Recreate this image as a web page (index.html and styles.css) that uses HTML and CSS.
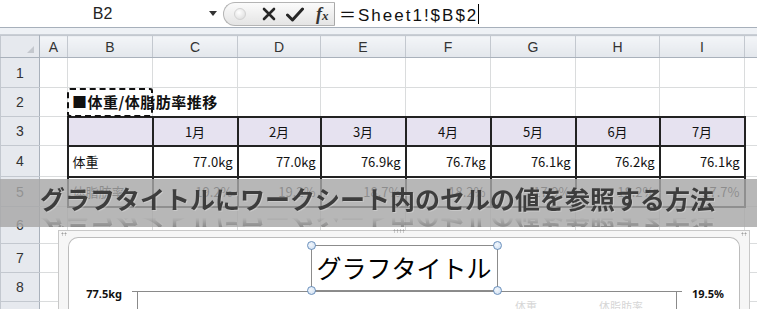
FILE: index.html
```html
<!DOCTYPE html>
<html lang="ja">
<head>
    <meta charset="UTF-8">
    <meta name="viewport" content="width=device-width, initial-scale=1.0">
    <title>グラフタイトルにワークシート内のセルの値を参照する方法</title>
    <link rel="stylesheet" href="styles.css">
</head>
<body>

    <div class="fbar">
        <div class="namebox">
            <span class="name">B2</span>
            <span class="drop"></span>
        </div>
        <div class="btns">
            <span class="dot"></span>
            <svg class="ico" width="14" height="14" viewBox="0 0 14 14"><path d="M2 2 L12 12 M12 2 L2 12" stroke="#262626" stroke-width="2.6" stroke-linecap="round"/></svg>
            <svg class="ico" width="18" height="15" viewBox="0 0 18 15"><path d="M1.5 8 L6.5 13 L16.5 2" fill="none" stroke="#262626" stroke-width="3" stroke-linecap="round" stroke-linejoin="round"/></svg>
            <span class="fx"><i>f</i><small>x</small></span>
        </div>
        <div class="formula">＝Sheet1!$B$2<span class="caret"></span></div>
    </div>
    <div class="strip"></div>

    <div class="sheet">
        <table class="grid">
            <colgroup>
                <col class="c-head">
                <col class="c-a">
                <col class="c-w"><col class="c-w"><col class="c-d"><col class="c-w">
                <col class="c-w"><col class="c-w"><col class="c-h"><col class="c-w">
                <col class="c-j">
            </colgroup>
            <tr class="r-head">
                <th class="corner"><span class="tri"></span></th>
                <th>A</th><th>B</th><th>C</th><th>D</th><th>E</th>
                <th>F</th><th>G</th><th>H</th><th>I</th><th></th>
            </tr>
            <tr class="r1">
                <th>1</th><td></td><td></td><td></td><td></td><td></td><td></td><td></td><td></td><td></td><td></td>
            </tr>
            <tr class="r2">
                <th>2</th><td></td>
                <td class="sel"><span class="title">■体重/体脂肪率推移</span></td>
                <td></td><td></td><td></td><td></td><td></td><td></td><td></td><td></td>
            </tr>
            <tr class="r3">
                <th>3</th><td></td>
                <td class="t mh"></td>
                <td class="t mh">1月</td><td class="t mh">2月</td><td class="t mh">3月</td><td class="t mh">4月</td>
                <td class="t mh">5月</td><td class="t mh">6月</td><td class="t mh">7月</td>
                <td></td>
            </tr>
            <tr class="r4">
                <th>4</th><td></td>
                <td class="t">体重</td>
                <td class="t num">77.0kg</td><td class="t num">77.0kg</td><td class="t num">76.9kg</td><td class="t num">76.7kg</td>
                <td class="t num">76.1kg</td><td class="t num">76.2kg</td><td class="t num">76.1kg</td>
                <td></td>
            </tr>
            <tr class="r5">
                <th>5</th><td></td>
                <td class="t">体脂肪率</td>
                <td class="t num">19.2%</td><td class="t num">19.2%</td><td class="t num">18.7%</td><td class="t num">18.2%</td>
                <td class="t num">17.9%</td><td class="t num">18.2%</td><td class="t num">17.7%</td>
                <td></td>
            </tr>
            <tr class="r6">
                <th>6</th><td></td><td></td><td></td><td></td><td></td><td></td><td></td><td></td><td></td><td></td>
            </tr>
            <tr class="r7">
                <th>7</th><td></td><td></td><td></td><td></td><td></td><td></td><td></td><td></td><td></td><td></td>
            </tr>
            <tr class="r8">
                <th>8</th><td></td><td></td><td></td><td></td><td></td><td></td><td></td><td></td><td></td><td></td>
            </tr>
            <tr class="r9">
                <th>9</th><td></td><td></td><td></td><td></td><td></td><td></td><td></td><td></td><td></td><td></td>
            </tr>
        </table>

        <!-- グラフ (シートの上に重なる) -->
        <div class="chart">
            <span class="grip grip-l"></span>
            <span class="grip grip-c"></span>
            <span class="grip grip-r"></span>
            <div class="chart-area">
                <div class="ctitle">
                    グラフタイトル
                    <span class="hd hd-tl"></span><span class="hd hd-tr"></span>
                    <span class="hd hd-bl"></span><span class="hd hd-br"></span>
                </div>
                <div class="plotrow">
                    <div class="axis-l">77.5kg</div>
                    <div class="plot">
                        <div class="plot-in">
                            <span class="legend">体重</span>
                            <span class="legend">体脂肪率</span>
                        </div>
                    </div>
                    <div class="axis-r">19.5%</div>
                </div>
            </div>
        </div>

        <!-- 見出し帯 -->
        <div class="banner">
            <span class="banner-text">グラフタイトルにワークシート内のセルの値を参照する方法</span>
        </div>
    </div>

</body>
</html>
```

FILE: styles.css
```css
* {
    margin: 0;
    padding: 0;
    box-sizing: border-box;
}
body {
    width: 757px;
    height: 309px;
    overflow: hidden;
    background-color: #fff;
    color: #111;
    font-family: "Noto Sans CJK JP", "Noto Sans", sans-serif;
}

/* 数式バー */
.fbar {
    display: flex;
    height: 28px;
    border-bottom: 1px solid #a7b0bb;
    background-color: #fff;
}
.namebox {
    width: 223px;
    display: flex;
    align-items: center;
}
.name {
    width: 205px;
    text-align: center;
    font-family: "Liberation Sans", sans-serif;
    font-size: 16px;
    color: #222;
}
.drop {
    width: 0;
    height: 0;
    border-left: 4px solid transparent;
    border-right: 4px solid transparent;
    border-top: 5px solid #333;
    margin-left: 4px;
}
.btns {
    width: 112px;
    margin: 2px 0 1px;
    display: flex;
    align-items: center;
    gap: 10px;
    padding-left: 10px;
    border: 1px solid #b4b4b4;
    border-right: 1px solid #a8a8a8;
    border-radius: 13px 0 0 13px;
    background: linear-gradient(#fbfbfb, #e4e4e4);
}
.dot {
    width: 12px;
    height: 12px;
    border-radius: 50%;
    border: 1px solid #d2d2d2;
    background: radial-gradient(circle at 40% 35%, #fff, #d8d8d8);
    margin-right: 6px;
}
.fx {
    font-family: "Liberation Serif", serif;
    font-weight: bold;
    font-size: 18px;
    color: #333;
    margin-left: 2px;
}
.fx small {
    font-size: 13px;
    font-style: italic;
}
.formula {
    flex: 1;
    display: flex;
    align-items: center;
    padding-left: 4px;
    font-family: "Liberation Sans", "Noto Sans CJK JP", sans-serif;
    font-size: 17px;
    letter-spacing: 2px;
    color: #111;
}
.caret {
    width: 1px;
    height: 20px;
    background-color: #000;
}
.strip {
    height: 7px;
    border-bottom: 1px solid #c9ced5;
    background-color: #eef1f5;
}

/* シート */
.sheet {
    position: relative;
}
.grid {
    width: 757px;
    table-layout: fixed;
    border-collapse: collapse;
    font-size: 13px;
}
.c-head { width: 39px; }
.c-a { width: 28px; }
.c-w { width: 85px; }
.c-d { width: 83px; }
.c-h { width: 84px; }
.c-j { width: 13px; }

.grid th {
    font-family: "Liberation Sans", sans-serif;
    font-weight: normal;
    font-size: 14px;
    color: #333;
    background: linear-gradient(#f3f5f8, #e3e7ec);
    border: 1px solid #c3c8cf;
}
.r-head th {
    height: 22px;
    border-bottom: 1px solid #a9b1bb;
}
.grid tr th:first-child {
    background: #e6e9ee;
    border-right: 1px solid #a9b1bb;
}
.corner {
    position: relative;
}
.tri {
    position: absolute;
    right: 5px;
    bottom: 4px;
    width: 0;
    height: 0;
    border-left: 7px solid transparent;
    border-bottom: 7px solid #c4c8ce;
}
.grid td {
    border: 1px solid #dadcdd;
    padding: 0 4px;
    white-space: nowrap;
    vertical-align: middle;
}
.r1 { height: 30px; }
.r2 { height: 29px; }
.r3 { height: 29px; }
.r4 { height: 31px; }
.r5 { height: 30px; }
.r6 { height: 37px; }
.r7 { height: 29px; }
.r8 { height: 29px; }
.r9 { height: 29px; }

.grid td.t {
    border: 2px solid #222;
}
.grid td.mh {
    background-color: #e6e2f0;
    text-align: center;
}
.grid td.num {
    text-align: right;
}
.sel {
    position: relative;
    overflow: visible;
}
.sel::after {
    content: "";
    position: absolute;
    left: -1px;
    top: 0;
    right: -1px;
    bottom: -1px;
    border: 2px dashed #111;
    border-radius: 3px;
}
.title {
    font-weight: bold;
    font-size: 15px;
    letter-spacing: 0.5px;
}

/* グラフ */
.chart {
    position: absolute;
    left: 58px;
    top: 195px;
    width: 692px;
    height: 90px;
    padding: 6px 9px 0 9px;
    border: 1px solid #c8c8c8;
    background-color: #f6f6f6;
}
.grip {
    position: absolute;
    height: 4px;
    background-image: radial-gradient(circle, #a0a0a0 0.8px, transparent 1.2px);
    background-size: 3px 3px;
}
.grip-l { left: 2px; top: 1px; width: 6px; }
.grip-c { left: 334px; top: -2px; width: 12px; }
.grip-r { right: 2px; top: 1px; width: 6px; }
.chart-area {
    height: 100%;
    background-color: #fff;
    border: 1px solid #bcbcbc;
    border-bottom: none;
    border-radius: 10px 10px 0 0;
}
.ctitle {
    position: relative;
    width: 187px;
    height: 46px;
    margin: 7px auto 0;
    border: 1px solid #8c8c8c;
    text-align: center;
    font-size: 25px;
    line-height: 43px;
    color: #000;
}
.hd {
    position: absolute;
    width: 9px;
    height: 9px;
    border-radius: 50%;
    border: 1px solid #6b91bd;
    background: radial-gradient(circle at 40% 40%, #f4f8fd, #c9dbef);
}
.hd-tl { left: -5px; top: -5px; }
.hd-tr { right: -5px; top: -5px; }
.hd-bl { left: -5px; bottom: -5px; }
.hd-br { right: -5px; bottom: -5px; }
.plotrow {
    display: flex;
}
.axis-l,
.axis-r {
    font-family: "Noto Sans", sans-serif;
    font-size: 11px;
    font-weight: bold;
    line-height: 14px;
    margin-top: -4px;
    color: #111;
}
.axis-l {
    width: 63px;
    text-align: right;
    padding-right: 10px;
}
.axis-r {
    padding-left: 10px;
}
.plot {
    width: 550px;
    padding: 0 5px;
    border-top: 1px solid #8a8a8a;
}
.plot-in {
    height: 30px;
    border-left: 1px solid #8a8a8a;
    border-right: 1px solid #8a8a8a;
    display: flex;
    justify-content: flex-end;
    gap: 62px;
    padding: 7px 33px 0 0;
}
.legend {
    font-size: 11px;
    line-height: 14px;
    color: #d6d6d6;
}

/* 見出し帯 */
.banner {
    position: absolute;
    left: 0;
    top: 144px;
    width: 757px;
    height: 48px;
    padding: 5px 0 0 40px;
    overflow: hidden;
    background-color: rgba(167, 167, 167, 0.82);
}
.banner-text {
    display: inline-block;
    font-size: 25px;
    font-weight: bold;
    line-height: 28px;
    color: #3d3d3d;
    text-shadow: 1px 1px 0 rgba(255, 255, 255, 0.25);
    -webkit-box-reflect: below -7px linear-gradient(to bottom, rgba(0, 0, 0, 0.6), transparent 55%);
}
```
